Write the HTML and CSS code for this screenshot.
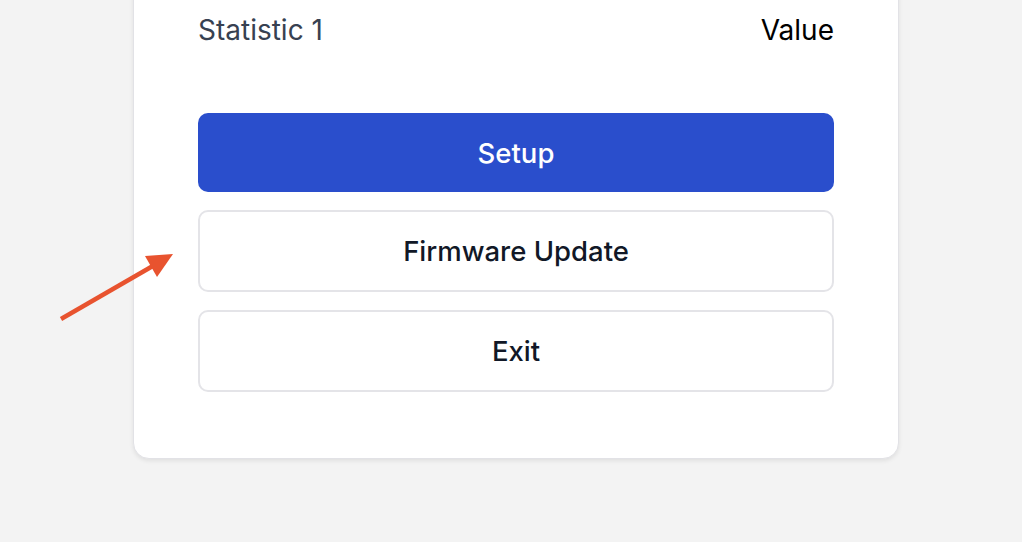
FILE: index.html
```html
<!DOCTYPE html>
<html>
<head>
<meta charset="utf-8">
<link rel="stylesheet" href="styles.css">
</head>
<body>
<div class="page">
  <div class="card">
    <div class="stat-row">
      <span class="stat-label">Statistic 1</span>
      <span class="stat-value">Value</span>
    </div>
    <div class="actions">
      <button class="btn btn-primary">Setup</button>
      <button class="btn btn-outline">Firmware Update</button>
      <button class="btn btn-outline">Exit</button>
    </div>
  </div>
  <svg class="arrow" width="200" height="340" viewBox="0 0 200 340">
    <line x1="61" y1="319" x2="158" y2="263" stroke="#e8532f" stroke-width="4.5"/>
    <polygon points="145,256 173,254 157,277" fill="#e8532f"/>
  </svg>
</div>
</body>
</html>
```
FILE: styles.css
```css
html, body {
  margin: 0;
  padding: 0;
  background: #f3f3f3;
  font-family: "Inter", "Liberation Sans", sans-serif;
  overflow: hidden;
}
.page {
  position: relative;
  display: flow-root;
  width: 1022px;
  height: 542px;
}
.card {
  position: relative;
  margin: -40px 0 0 133px;
  width: 766px;
  background: #fff;
  border: 1px solid #e2e2e6;
  border-radius: 16px;
  box-shadow: 0 2px 4px rgba(0,0,0,0.08);
  padding: 40px 64px 66px 64px;
  box-sizing: border-box;
}
.stat-row {
  display: flex;
  justify-content: space-between;
  align-items: center;
  height: 58px;
  line-height: 58px;
  font-size: 28px;
}
.stat-label {
  color: #374151;
}
.stat-value {
  color: #000;
}
.actions {
  display: flex;
  flex-direction: column;
  gap: 18px;
  margin-top: 54px;
}
.btn {
  font-family: inherit;
  font-size: 27.5px;
  font-weight: 550;
  border-radius: 10px;
  cursor: pointer;
  width: 100%;
  box-sizing: border-box;
}
.btn-primary {
  height: 79px;
  background: #2a4ecc;
  color: #fff;
  border: none;
}
.btn-outline {
  height: 82px;
  background: #fff;
  color: #111827;
  border: 2px solid #e4e4e8;
}
.arrow {
  position: absolute;
  left: 0;
  top: 0;
}
```
